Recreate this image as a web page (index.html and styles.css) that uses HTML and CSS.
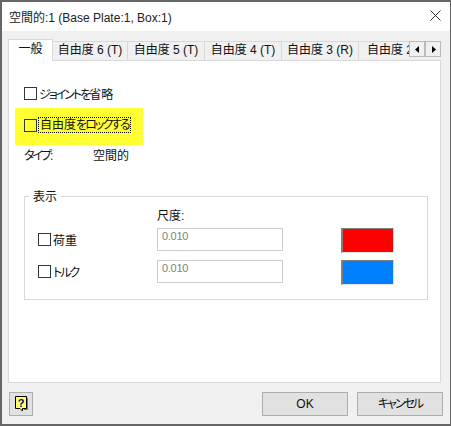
FILE: index.html
```html
<!DOCTYPE html>
<html lang="ja">
<head>
    <meta charset="UTF-8">
    <meta name="viewport" content="width=device-width, initial-scale=1">
    <title>空間的</title>
    <link rel="stylesheet" href="styles.css">
</head>
<body>
<div class="vindu">
    <div class="tittel">
        <span class="tittelTekst">空間的:1 (Base Plate:1, Box:1)</span>
        <svg class="lukk" width="11" height="11" viewBox="0 0 11 11"><path d="M.5 .5 L10.5 10.5 M10.5 .5 L.5 10.5" stroke="#333" fill="none"/></svg>
    </div>
    <div class="innhold">
        <div class="faner">
            <div class="fane aktiv">一般</div>
            <div class="fane smal">自由度 6 (T)</div>
            <div class="fane">自由度 5 (T)</div>
            <div class="fane">自由度 4 (T)</div>
            <div class="fane">自由度 3 (R)</div>
            <div class="fane siste">自由度 2 (R)</div>
            <div class="piler">
                <div class="pil"><svg width="5" height="7" viewBox="0 0 5 7"><path d="M4 0 L4 7 L0 3.5 Z" fill="#000"/></svg></div>
                <div class="pil"><svg width="5" height="7" viewBox="0 0 5 7"><path d="M1 0 L1 7 L5 3.5 Z" fill="#000"/></svg></div>
            </div>
        </div>
        <div class="panel">
            <label class="valg valg1"><span class="boks"></span><span class="kana">ジョイントを</span>省略</label>
            <div class="gul">
                <label class="valg"><span class="boks"></span><span class="fokus">自由度<span class="kana">をロックする</span></span></label>
            </div>
            <div class="type"><span class="typeNavn"><span class="kana">タイプ</span>:</span><span>空間的</span></div>
            <div class="gruppe">
                <div class="gruppeNavn">表示</div>
                <div class="skala">尺度:</div>
                <div class="rad">
                    <label class="valg radValg"><span class="boks"></span>荷重</label>
                    <div class="felt">0.010</div>
                    <div class="farge rod"></div>
                </div>
                <div class="rad">
                    <label class="valg radValg"><span class="boks"></span><span class="kana">トルク</span></label>
                    <div class="felt">0.010</div>
                    <div class="farge bla"></div>
                </div>
            </div>
        </div>
        <div class="bunn">
            <div class="hjelp">
                <svg width="14" height="16" viewBox="0 0 14 16">
                    <path d="M1.5 .5 H12.5 V12.5 H8.5 L8.5 15 L6 12.5 H1.5 Z" fill="#ffff66" stroke="#000"/>
                    <path d="M13.5 2 V13.5 H10" fill="none" stroke="#777"/>
                    <text x="7" y="10.5" class="sporsmal">?</text>
                </svg>
            </div>
            <div class="knapper">
                <div class="knapp">OK</div>
                <div class="knapp"><span class="kana">キャンセル</span></div>
            </div>
        </div>
    </div>
</div>
</body>
</html>
```

FILE: styles.css
```css
html, body {
    margin: 0;
    padding: 0;
    background-color: #fff;
}
body {
    width: 451px;
    height: 426px;
    overflow: hidden;
    font-family: "Liberation Sans", "Noto Sans CJK JP", sans-serif;
    font-size: 12px;
    font-feature-settings: "palt";
    color: #111;
}
.kana {
    letter-spacing: -2px;
}
.vindu {
    width: 451px;
    height: 426px;
    box-sizing: border-box;
    border: solid #666;
    border-width: 2px 1px 2px 2px;
    display: flex;
    flex-direction: column;
}
.tittel {
    height: 29px;
    flex: none;
    background-color: #fff;
    display: flex;
    align-items: center;
    justify-content: space-between;
    padding: 0 9px 0 7px;
}
.tittelTekst {
    color: #222;
}
.lukk {
    margin-bottom: 2px;
}
.innhold {
    flex: 1;
    background-color: #f0f0f0;
    padding: 8px 9px 0 6px;
    display: flex;
    flex-direction: column;
}
.faner {
    display: flex;
    height: 21px;
    flex: none;
    position: relative;
    z-index: 1;
}
.fane {
    flex: none;
    width: 77px;
    box-sizing: border-box;
    height: 19px;
    margin-top: 2px;
    background-color: #f0f0f0;
    border: 1px solid #d9d9d9;
    border-left-width: 0;
    border-bottom-width: 0;
    text-align: center;
    line-height: 17px;
    white-space: nowrap;
}
.fane.smal {
    width: 75px;
}
.fane.aktiv {
    width: 45px;
    height: 22px;
    margin-top: 0;
    background-color: #fff;
    border-left-width: 1px;
    line-height: 18px;
}
.fane.siste {
    width: 50px;
    overflow: hidden;
    text-align: left;
    padding-left: 8px;
    border-right: 0;
}
.piler {
    display: flex;
    position: absolute;
    right: 0;
    top: 2px;
}
.pil {
    width: 16px;
    height: 16px;
    box-sizing: border-box;
    background-color: #f0f0f0;
    border: 1px solid #bbb;
    display: flex;
    align-items: center;
    justify-content: center;
}
.panel {
    height: 323px;
    flex: none;
    box-sizing: border-box;
    background-color: #fff;
    border: 1px solid #d9d9d9;
    padding: 0 14px 0 15px;
    display: flex;
    flex-direction: column;
}
.valg {
    display: flex;
    align-items: center;
    height: 13px;
    white-space: nowrap;
}
.valg1 {
    margin-top: 26px;
}
.boks {
    width: 13px;
    height: 13px;
    box-sizing: border-box;
    border: 1px solid #2b3a42;
    margin-right: 2px;
    flex: none;
}
.gul {
    background-color: #ffff33;
    width: 128px;
    height: 37px;
    margin: 8px 0 0 -9px;
    padding: 0 0 3px 9px;
    box-sizing: border-box;
    display: flex;
    align-items: center;
}
.fokus {
    outline: 1px dotted #000;
    padding: 0 1px;
    line-height: 14px;
}
.type {
    display: flex;
    height: 18px;
    align-items: center;
}
.typeNavn {
    width: 69px;
}
.gruppe {
    position: relative;
    margin: 33px -2px 0 0;
    height: 104px;
    box-sizing: border-box;
    border: 1px solid #d9d9d9;
    padding: 11px 0 0 13px;
}
.gruppeNavn {
    position: absolute;
    top: -8px;
    left: 4px;
    background-color: #fff;
    padding: 0 4px;
    line-height: 16px;
}
.skala {
    margin: 0 0 4px 119px;
    height: 16px;
    line-height: 16px;
}
.rad {
    display: flex;
    align-items: flex-start;
    margin-bottom: 7px;
}
.radValg {
    width: 119px;
    height: 22px;
}
.felt {
    width: 126px;
    height: 23px;
    box-sizing: border-box;
    border: 1px solid #ccc;
    color: #808080;
    padding-left: 4px;
    line-height: 15px;
    font-size: 11px;
    letter-spacing: -.3px;
}
.farge {
    width: 53px;
    height: 25px;
    box-sizing: border-box;
    margin-left: 58px;
    border: solid;
    border-width: 1px 1px 1px 2px;
    border-color: #808080 #e3e3e3 #e3e3e3 #808080;
}
.rod {
    background-color: #ff0000;
}
.bla {
    background-color: #0080ff;
}
.bunn {
    flex: 1;
    display: flex;
    justify-content: space-between;
    align-items: flex-start;
    padding: 9px 0 0 1px;
}
.hjelp {
    width: 24px;
    height: 24px;
    box-sizing: border-box;
    background-color: #e1e1e1;
    border: 1px solid #adadad;
    display: flex;
    align-items: center;
    justify-content: center;
}
.sporsmal {
    font-size: 11px;
    font-weight: bold;
    fill: #000080;
    text-anchor: middle;
}
.knapper {
    display: flex;
    gap: 9px;
    margin-right: -2px;
}
.knapp {
    width: 86px;
    height: 24px;
    box-sizing: border-box;
    background-color: #e1e1e1;
    border: 1px solid #adadad;
    text-align: center;
    line-height: 22px;
}
```
